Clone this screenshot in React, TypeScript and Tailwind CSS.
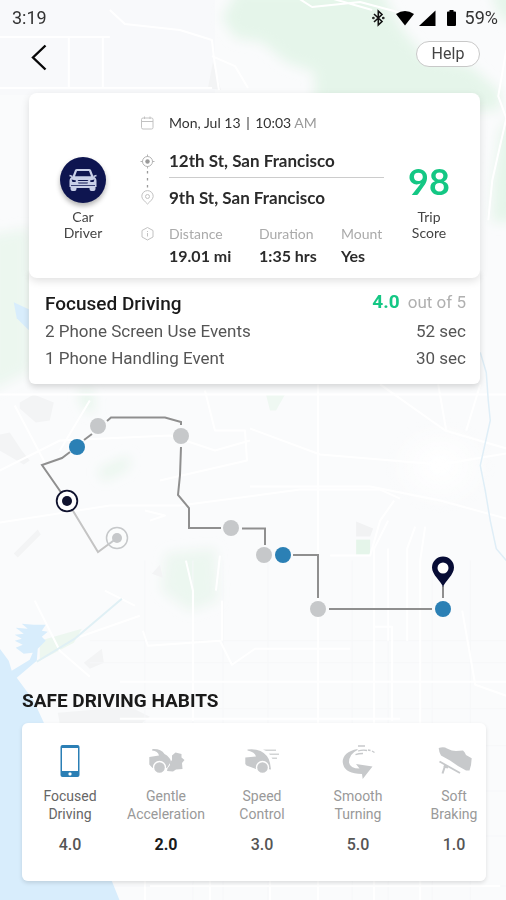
import React from "react";

const dots = [
  { x: 98, y: 426, color: "#c6c8ca" },
  { x: 77, y: 447, color: "#2b80b5" },
  { x: 181, y: 436, color: "#c6c8ca" },
  { x: 231, y: 528, color: "#c6c8ca" },
  { x: 264, y: 555, color: "#c6c8ca" },
  { x: 283, y: 555, color: "#2b80b5" },
  { x: 318, y: 609, color: "#c6c8ca" },
  { x: 443, y: 609, color: "#2b80b5" },
];

function MapBackground() {
  return (
    <svg
      className="absolute inset-0 h-full w-full"
      viewBox="0 0 506 900"
      preserveAspectRatio="xMidYMin slice"
      aria-hidden="true"
    >
      <defs>
        <filter id="soft" x="-10%" y="-10%" width="120%" height="120%">
          <feGaussianBlur stdDeviation="6" />
        </filter>
        <radialGradient id="downtown">
          <stop offset="0" stopColor="#ffffff" />
          <stop offset="1" stopColor="#ffffff" stopOpacity="0" />
        </radialGradient>
      </defs>
      <rect width="506" height="900" fill="#fafbfc" />
      <rect width="215" height="95" fill="#f8f9fb" />

      {/* parks */}
      <g fill="#e5f5ea" filter="url(#soft)">
        <path d="M238 -10 L380 -10 L392 12 L404 32 L425 56 L470 66 L500 92 L500 110 L315 110 L314 72 L286 62 L262 42 L236 38 L222 18 Z" />
        <path d="M490 -10 L520 -10 L520 25 L500 18 Z" />
        <path d="M500 130 L520 110 L520 220 L492 222 L494 180 Z" />
        <path d="M-10 235 L30 228 L30 370 L-10 390 Z" opacity="0.7" />
        <path d="M166 553 L215 548 L218 600 L190 610 L162 590 Z" opacity="0.65" />
        <path d="M98 470 L130 455 L128 468 L104 480 Z" opacity="0.8" />
        <path d="M78 392 L92 390 L94 412 L86 410 Z" />
      </g>
      <path d="M356 539 H370 V554 H356 Z" fill="#e5f5ea" />
      <path d="M356 521 L373 528 L370 536 H356 Z" fill="#f1f2f3" />
      <path d="M40 640 L82 628 L74 642 L40 660 Z" fill="#edf7f0" />
      <path d="M266 394 H285 L276 410 H270 Z" fill="#eff8f2" />

      {/* built-up areas */}
      <g fill="#f3f4f5">
        <path d="M20 402 L34 394 L54 402 L50 420 L36 422 L20 408 Z" />
        <path d="M0 434 L10 432 L22 450 L30 460 L24 464 L0 450 Z" />
        <path d="M14 553 L38 529 L41 534 L18 557 Z" />
        <path d="M152 573 L160 564 L163 577 Z" />
        <path d="M84 662 L102 648 L104 662 L90 668 Z" />
        <path d="M58 712 L130 706 L150 716 L140 724 L60 723 Z" />
        <path d="M208 88 L213 62 L221 90 Z" />
      </g>

      {/* streets */}
      <g stroke="#f6f7f9" strokeWidth="1" fill="none">
        {[145, 193, 223, 268, 318, 352, 388, 432, 470].map((x) => (
          <path key={x} d={`M${x} 560 V900`} />
        ))}
        {[640, 662, 708, 745, 790, 835, 885].map((y) => (
          <path key={y} d={`M90 ${y} H506`} />
        ))}
      </g>
      <g stroke="#ffffff" fill="none" strokeWidth="2" strokeLinejoin="round">
        <path d="M0 37 H60 L110 37 M69 37 V88 M103 37 V88 M0 88 H212" />
        <path d="M110 10 L125 24 L180 30 L212 40 L214 58 L219 90 M212 56 L235 66 L248 88" />
        <path d="M298 -2 L312 7 L360 2 L405 14 M330 -2 L372 10" />
        <path d="M506 50 L498 96 L506 118 L492 180 L488 220" />
        <path d="M0 394 H506 M0 522 L110 505 L180 505 L300 489 H380 L400 498" />
        <path d="M15 405 L45 462 M0 470 L60 440 L170 435 L215 450 L250 440 M90 400 L60 450" />
        <path d="M205 390 L215 430 H245 L247 460 L160 480 M318 384 V489 M318 489 V900" />
        <path d="M250 428 L320 454 L440 464 L506 453 M250 486 H370 L440 500 L506 518" />
        <path d="M380 384 L445 430 L506 448 M438 384 L446 430 M480 384 L466 430" />
        <path d="M186 560 L193 590 V720 M220 555 L216 590 M145 510 L165 515 L150 520" />
        <path d="M330 555 H370 L380 520 L394 500 M374 900 V548 L388 520 M388 640 V548 M407 640 V548 L415 526 M425 526 L420 560 V900" />
        <path d="M35 600 L60 650 L90 676 M80 636 L140 615 M143 630 L148 645 L220 640 L232 664 L255 648 H350" />
        <path d="M120 681 H506 M120 718 H400 M375 626 H392 V720 M462 610 L475 684 L506 695" />
        <path d="M105 590 L135 605 M222 600 L222 640" />
        <path d="M150 885 H500 M145 880 V900 M210 880 V900 M270 880 V900" />
      </g>
      <ellipse cx="440" cy="465" rx="55" ry="48" fill="url(#downtown)" />

      {/* water */}
      <g fill="#d8edfc">
        <path d="M0 648 L9 660 L12 670 L30 659 L33 652 L24 653 L16 647 L23 644 L15 640 L22 638 L15 634 L24 633 L16 627 L28 628 L22 623 L34 624 L46 624 L42 630 L48 631 L42 636 L46 640 L38 648 L37 660 L17 677 L34 700 L45 724 L62 760 L110 875 L120 900 L0 900 Z" />
        <path d="M14 302 L29 309 V330 L17 318 Z" />
      </g>
      <path d="M37 661 L75 638 L122 598" stroke="#e0f0f5" strokeWidth="2" fill="none" />
      <path
        d="M480 352 L486 372 L488 400 L490 420 L480 465 L485 490 L490 520 L496 548 L506 560"
        stroke="#dfeef7"
        strokeWidth="1.5"
        fill="none"
      />
    </svg>
  );
}

function StatusBar() {
  return (
    <div className="flex h-9 items-center justify-between pr-2 pl-3 text-lg text-[#333333]">
      <span>3:19</span>
      <div className="flex items-center">
        <svg className="mr-2.5" width="13" height="18" viewBox="0 0 13 18" fill="none" stroke="#111" strokeWidth="1.6">
          <path d="M2 5 L10 12.5 L6.3 16 V2 L10 5.5 L2 13" />
          <circle cx="1.4" cy="9" r="0.5" />
          <circle cx="11.3" cy="9" r="0.5" />
        </svg>
        <svg className="mr-1" width="20" height="18" viewBox="0 0 20 18">
          <path d="M1 5 Q10 -1 19 5 L10 16.5 Z" fill="#000" />
        </svg>
        <svg className="mr-2.5" width="17" height="18" viewBox="0 0 17 18">
          <path d="M0 17 L16.500 1.500 V17 Z" fill="#000" />
        </svg>
        <svg className="mr-2" width="11" height="18" viewBox="0 0 11 18">
          <path d="M3.500 1 H7.500 V2.500 H9 Q10 2.500 10 3.500 V16 Q10 17 9 17 H2 Q1 17 1 16 V3.500 Q1 2.500 2 2.500 H3.500 Z" fill="#000" />
        </svg>
        <span>59%</span>
      </div>
    </div>
  );
}

function CarIcon() {
  return (
    <svg width="30" height="26" viewBox="0 0 30 26">
      <path
        d="M7 3 Q7.500 2 9 2 H21 Q22.500 2 23 3 L25.500 9.500 Q28.500 10.500 28.500 14 V20 H27.500 V22 Q27.500 24 25.500 24 H23.500 Q21.500 24 21.500 22 V21 H8.500 V22 Q8.500 24 6.500 24 H4.500 Q2.500 24 2.500 22 V20 H1.500 V14 Q1.500 10.500 4.500 9.500 Z"
        fill="#c9d0e8"
      />
      <path d="M9 4 H21 L23 9.300 H7 Z" fill="#0e1550" />
      <path
        d="M3.500 12.500 L8 13.500 L7.500 15 H4.500 Z M26.500 12.500 L22 13.500 L22.500 15 H25.500 Z M9.500 13 H20.500 L19.500 14 H10.500 Z M10 15.500 H20 L19.500 16.500 H10.500 Z M3 18 H27 V18.700 H3 Z"
        fill="#0e1550"
      />
      <path d="M1.500 8.500 L4.500 9.500 M28.500 8.500 L25.500 9.500" stroke="#c9d0e8" strokeWidth="1.5" />
    </svg>
  );
}

function CalendarIcon() {
  return (
    <svg width="20" height="20" viewBox="0 0 20 20" fill="none" stroke="#c2c2c2">
      <rect x="4.500" y="5" width="11.500" height="11" rx="1.500" />
      <path d="M4.500 8.500 H16 M7.500 3.500 V6 M13 3.500 V6" />
    </svg>
  );
}

function RouteIcon() {
  return (
    <svg className="shrink-0" width="20" height="60" viewBox="0 0 20 60" fill="none" stroke="#b4b4b4">
      <circle cx="10.500" cy="12.500" r="5" />
      <circle cx="10.500" cy="12.500" r="2.200" fill="#999" stroke="none" />
      <path d="M10.500 5.500 V8 M10.500 17 V19.500 M3.500 12.500 H6 M15 12.500 H17.500" />
      <path d="M10.500 22 V41" stroke="#999" strokeWidth="1.300" strokeDasharray="2.500 4.500" />
      <path d="M10.500 55 C7.500 52 4.800 50 4.800 47.300 A5.700 5.700 0 0 1 16.200 47.300 C16.200 50 13.500 52 10.500 55 Z" stroke="#c2c2c2" />
      <circle cx="10.500" cy="47.500" r="2" stroke="#c2c2c2" />
    </svg>
  );
}

function InfoIcon() {
  return (
    <svg className="shrink-0" width="20" height="16" viewBox="0 0 20 16" fill="none" stroke="#c2c2c2">
      <path d="M10.500 1.500 L16 4.500 V11 L10.500 14 L5 11 V4.500 Z" strokeLinejoin="round" />
      <path d="M10.500 7 V10.500 M10.500 5 V6" />
    </svg>
  );
}

function TripCard() {
  return (
    <section className="relative flex rounded-lg bg-white pt-5 pr-1.5 pb-3 font-['Lato',sans-serif] shadow-[0_3px_8px_rgba(0,0,0,0.12)]">
      <div className="flex w-[108px] shrink-0 flex-col items-center pt-11">
        <div className="flex h-[46px] w-[46px] items-center justify-center rounded-full bg-[#0e1550] shadow-[0_3px_5px_rgba(0,0,0,0.3)]">
          <CarIcon />
        </div>
        <p className="mt-1.5 text-center text-sm leading-4 text-[#444444]">
          Car
          <br />
          Driver
        </p>
      </div>

      <div className="min-w-0 flex-1">
        <div className="flex items-center gap-3">
          <CalendarIcon />
          <p className="text-sm leading-5 text-[#333333]">
            Mon, Jul 13 <span className="px-0.5">|</span> 10:03 <span className="text-[#999999]">AM</span>
          </p>
        </div>
        <div className="mt-4 flex gap-3">
          <RouteIcon />
          <div className="flex-1 text-[17px] leading-6 font-bold text-[#2b2b2b]">
            <p className="border-b border-[#cccccc] pb-1">12th St, San Francisco</p>
            <p className="pt-2">9th St, San Francisco</p>
          </div>
        </div>
        <div className="mt-4 flex gap-3">
          <InfoIcon />
          <dl className="grid flex-1 grid-cols-[90px_82px_auto] whitespace-nowrap">
            <Stat label="Distance" value="19.01 mi" />
            <Stat label="Duration" value="1:35 hrs" />
            <Stat label="Mount" value="Yes" />
          </dl>
        </div>
      </div>

      <div className="flex w-[90px] shrink-0 flex-col items-center pt-12">
        <p className="text-4xl font-bold text-[#14c784]">98</p>
        <p className="mt-2 text-center text-sm leading-4 text-[#444444]">
          Trip
          <br />
          Score
        </p>
      </div>
    </section>
  );
}

function Stat({ label, value }: { label: string; value: string }) {
  return (
    <div>
      <dt className="text-sm leading-4 text-[#aaaaaa]">{label}</dt>
      <dd className="mt-1 text-base leading-5 font-bold text-[#2b2b2b]">{value}</dd>
    </div>
  );
}

function FocusedDriving() {
  return (
    <section className="-mt-2 rounded-b-md bg-white pt-5 pr-3.5 pb-3 pl-4 text-[17px] leading-[27px] text-[#555555] shadow-[0_3px_6px_rgba(0,0,0,0.15)]">
      <div className="flex justify-between">
        <h2 className="text-[19px] leading-7 font-medium text-[#1a1a1a]">Focused Driving</h2>
        <p className="leading-6 text-[#b0b0b0]">
          <span className="mr-1 text-[19px] font-bold text-[#14c784]">4.0</span> out of 5
        </p>
      </div>
      <div className="flex justify-between">
        <p>2 Phone Screen Use Events</p>
        <p>52 sec</p>
      </div>
      <div className="flex justify-between">
        <p>1 Phone Handling Event</p>
        <p>30 sec</p>
      </div>
    </section>
  );
}

function TripRoute() {
  return (
    <svg className="relative block w-full" viewBox="0 384 506 305" role="img" aria-label="Trip route">
      <g fill="none" stroke="#8f8f8f" strokeWidth="2">
        <path d="M67 501 L42 465 L62 458 L70 452 M84 440 L92 434 M107 421 L111 417.500 H165 L181 422 V425" />
        <path d="M181 447 L180 475 L178 495 L189 508 V528 H221 M242 528.500 H265 V545" />
        <path d="M293 555 H318 V598 M329 609 H432 M443 598 V586" />
        <path d="M67 501 L98 552 L117 538" stroke="#c4c4c4" />
      </g>
      <circle cx="117" cy="538" r="10.500" fill="#fbfcfc" stroke="#c6c8ca" strokeWidth="1.500" />
      <circle cx="117" cy="538" r="5" fill="#c6c8ca" />
      <path d="M109 544 L117 538" stroke="#c6c8ca" strokeWidth="2" />
      <circle cx="67" cy="501" r="10.300" fill="#fff" stroke="#10132f" strokeWidth="1.800" />
      <circle cx="67" cy="501" r="5" fill="#10132f" />
      {dots.map((dot) => (
        <circle key={`${dot.x}-${dot.y}`} cx={dot.x} cy={dot.y} r="8" fill={dot.color} />
      ))}
      <path
        d="M443 587 C441 581 432 575 432 567.500 A11 11 0 0 1 454 567.500 C454 575 445 581 443 587 Z"
        fill="#070c35"
      />
      <circle cx="443" cy="568" r="5.500" fill="#fff" />
    </svg>
  );
}

function PhoneIcon() {
  return (
    <svg width="40" height="36" viewBox="0 0 40 36">
      <rect x="10.500" y="2" width="19" height="32" rx="2" fill="#2b7fb5" />
      <rect x="12" y="5" width="16" height="23" fill="#fff" />
      <rect x="18.500" y="29.500" width="3" height="3" rx="1" fill="#fff" />
    </svg>
  );
}

function AccelerationIcon() {
  return (
    <svg width="40" height="36" viewBox="0 0 40 36" fill="#c7c9cb">
      <path d="M6.500 6 Q15 5.500 18.500 11 Q24 14 25 18.500 L21 25 H6.500 L3.300 21.500 V14 L13 12.500 Q12 8 6 7.500 Z" />
      <circle cx="13.500" cy="24.500" r="6" stroke="#fff" strokeWidth="1.400" />
      <path d="M26 12.500 L29.500 9.500 L35.500 11 L35.500 14.500 L38.500 17 L36 20 L36.500 26 L30 26.500 L27 28.500 L21 28 L21.500 25.500 L24 22 L24 19.500 L26 17 Z" />
    </svg>
  );
}

function SpeedIcon() {
  return (
    <svg width="40" height="36" viewBox="0 0 40 36" fill="#c7c9cb">
      <path d="M5.500 6.500 Q13 5.500 18.500 8 Q26.500 12 28 20 L29 26.500 L25 26 H14 L4.500 22.500 L3.300 21 V14.500 L14 13.500 Q13 9 5.500 7.500 Z" />
      <circle cx="20.500" cy="24.500" r="6" stroke="#fff" strokeWidth="1.400" />
      <path d="M21 6.500 H34 V8 H24 Z M27 10.500 H37 V12 H28 Z M29.500 14.500 H35 V16 H30.500 Z" opacity="0.8" />
    </svg>
  );
}

function TurningIcon() {
  return (
    <svg width="40" height="36" viewBox="0 0 40 36" fill="#c7c9cb">
      <path d="M19.500 6 Q4.700 9 4.700 19 Q5.500 29.500 20 30.800 L24 31 L24.700 36 L34.500 23.500 L18 21 L21.500 25.500 Q12 25.500 11 19.500 Q11 11 19.500 7 Z" />
      <path
        d="M20 3 H27 M20 8 Q25 6.500 29 7.500 M17.500 11.700 Q20.500 10.500 25 10.500 M30 7 L32.500 7.500 M34 8 L36.500 9.500"
        fill="none"
        stroke="#c7c9cb"
        strokeWidth="1.300"
      />
    </svg>
  );
}

function BrakingIcon() {
  return (
    <svg width="40" height="36" viewBox="0 0 40 36" fill="#c7c9cb">
      <path d="M4.700 5 Q10 3.500 13 5.500 Q18 8 22 8 L29 7.500 Q31 9 32 12 L37.700 15.300 Q37.500 22 35.500 27.500 L32 27.500 L24 23 L16 17.500 L7 12.500 Q5 9.500 4.700 5 Z" />
      <path d="M5.500 18.500 L26 30 M11.500 21.500 L8.500 30.500 M9.500 23.500 L14 24.500" fill="none" stroke="#c7c9cb" strokeWidth="2" />
    </svg>
  );
}

const habits = [
  { top: "Focused", bottom: "Driving", score: "4.0", icon: <PhoneIcon />, label: "text-[#666666]", value: "text-[#555555] font-medium" },
  { top: "Gentle", bottom: "Acceleration", score: "2.0", icon: <AccelerationIcon />, label: "text-[#999999]", value: "text-[#1a1a1a] font-bold" },
  { top: "Speed", bottom: "Control", score: "3.0", icon: <SpeedIcon />, label: "text-[#999999]", value: "text-[#555555] font-medium" },
  { top: "Smooth", bottom: "Turning", score: "5.0", icon: <TurningIcon />, label: "text-[#999999]", value: "text-[#555555] font-medium" },
  { top: "Soft", bottom: "Braking", score: "1.0", icon: <BrakingIcon />, label: "text-[#999999]", value: "text-[#555555] font-medium" },
];

function SafeHabits() {
  return (
    <section className="relative pr-5 pb-5 pl-[22px]">
      <h2 className="text-[19px] leading-6 font-bold text-[#1a1a1a]">SAFE DRIVING HABITS</h2>
      <div className="mt-2.5 flex overflow-x-auto rounded-md bg-white pt-5 pb-6 shadow-[0_2px_4px_rgba(0,0,0,0.12)] [scrollbar-width:none]">
        {habits.map((habit) => (
          <button key={habit.top} type="button" className="flex w-24 shrink-0 flex-col items-center">
            {habit.icon}
            <span className={`mt-2 text-sm leading-[18px] ${habit.label}`}>
              {habit.top}
              <br />
              {habit.bottom}
            </span>
            <span className={`mt-2.5 text-base leading-6 ${habit.value}`}>{habit.score}</span>
          </button>
        ))}
      </div>
    </section>
  );
}

export default function App() {
  return (
    <div className="relative min-h-screen overflow-hidden bg-[#fafbfc] font-['Roboto',sans-serif]">
      <MapBackground />
      <div className="relative">
        <StatusBar />
        <header className="flex h-[57px] items-start justify-between pr-[26px] pl-7">
          <button type="button" aria-label="Back" className="pt-2">
            <svg width="22" height="28" viewBox="0 0 22 28" fill="none" stroke="#080808" strokeWidth="2.400">
              <path d="M17.500 1.500 L5 13.500 L17.500 25.500" />
            </svg>
          </button>
          <button
            type="button"
            className="mt-[5px] h-[26px] w-16 rounded-full border border-[#c8c8c8] bg-white text-base leading-6 text-[#444444]"
          >
            Help
          </button>
        </header>
        <main>
          <div className="pr-[26px] pl-[29px]">
            <TripCard />
            <FocusedDriving />
          </div>
          <TripRoute />
          <SafeHabits />
        </main>
      </div>
    </div>
  );
}
